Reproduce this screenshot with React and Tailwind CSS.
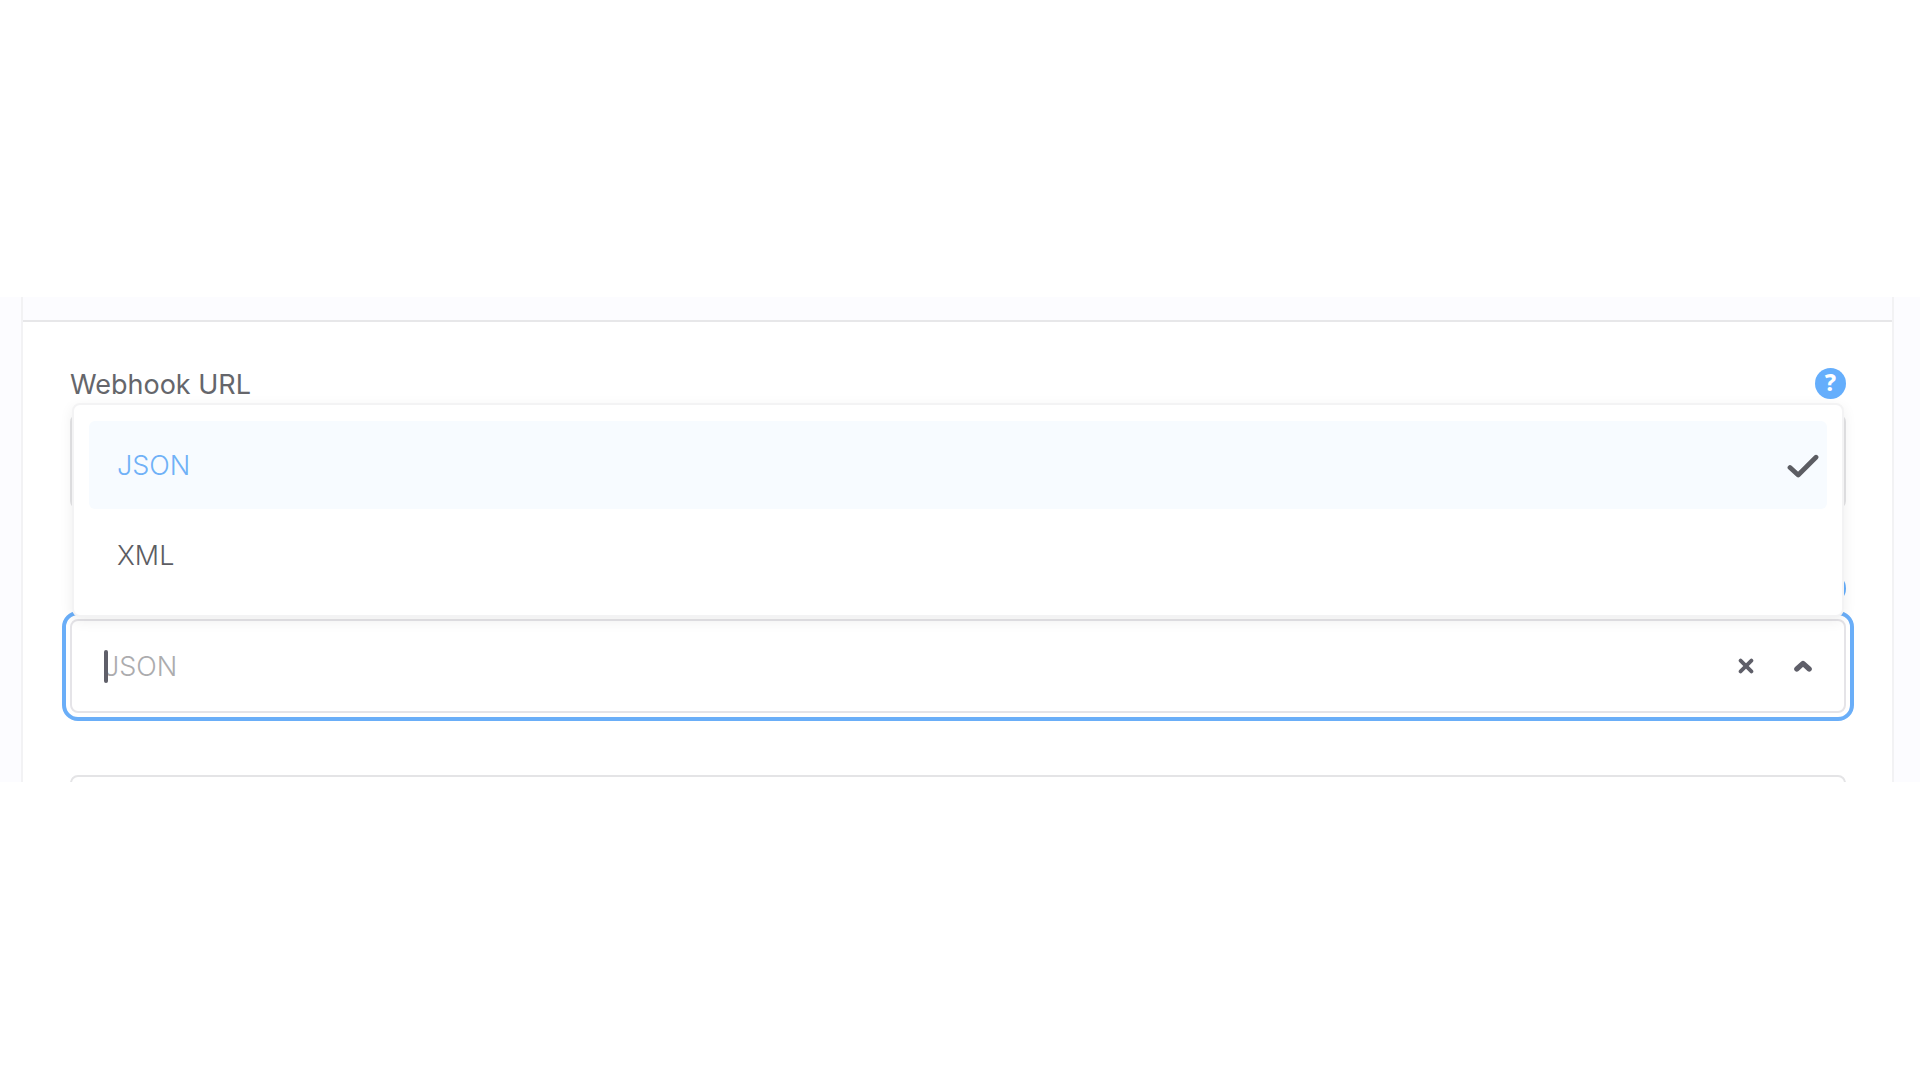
import React from "react";

function HelpButton({ label }) {
  return (
    <button
      type="button"
      aria-label={label}
      className="flex size-[31px] items-center justify-center rounded-full bg-[#65aefc] pb-0.5 font-['Noto_Sans',sans-serif] text-[23px] leading-none font-extrabold text-white"
    >
      ?
    </button>
  );
}

function CheckIcon() {
  return (
    <svg viewBox="0 0 32 24" className="h-6 w-8" fill="none" stroke="#5c5d63" strokeWidth="4.8" strokeLinecap="round" strokeLinejoin="round" aria-hidden="true">
      <path d="M3 13.5 11.2 21 29 3.2" />
    </svg>
  );
}

function ClearIcon() {
  return (
    <svg viewBox="0 0 16 16" className="size-4" fill="none" stroke="#5f5f69" strokeWidth="3.8" strokeLinecap="round" aria-hidden="true">
      <path d="M2.6 2.6 13.4 13.4M13.4 2.6 2.6 13.4" />
    </svg>
  );
}

function ChevronUpIcon() {
  return (
    <svg viewBox="0 0 18 12" className="h-3 w-[18px]" fill="none" stroke="#5f5f69" strokeWidth="5.2" strokeLinecap="round" strokeLinejoin="round" aria-hidden="true">
      <path d="M2.8 9 9 3.4 15.2 9" />
    </svg>
  );
}

function Option({ children, selected }) {
  return (
    <button
      type="button"
      role="option"
      aria-selected={selected}
      className={
        selected
          ? "flex h-[88px] w-full items-center justify-between rounded-md bg-[#f7fbff] pt-0.5 pr-2 pl-7 text-[#6fb1f7]"
          : "flex h-[88px] w-full items-center justify-between rounded-md pt-0.5 pr-2 pl-7 text-[#5c5d63]"
      }
    >
      <span>{children}</span>
      {selected && <CheckIcon />}
    </button>
  );
}

export default function App() {
  return (
    <main className="min-h-screen bg-white pt-[297px] font-[Inter,sans-serif] text-[27px] leading-[34px] font-[360] text-[#5c5d63]">
      <section className="bg-[#fcfcff] pr-[26px] pl-[21px]">
        <div className="border-x-2 border-[#f2f2f4] bg-white">
          <div className="h-[25px] border-b-2 border-[#e7e7e9] bg-[#fcfcff]" />
          <form className="pt-[46px] pr-[46px] pl-[47px]">
            <div className="flex items-start justify-between">
              <label htmlFor="webhook-url" className="font-normal text-[#65666b]">Webhook URL</label>
              <HelpButton label="Webhook URL help" />
            </div>
            <input
              id="webhook-url"
              type="text"
              className="mt-3 block h-[95px] w-full rounded-lg border-2 border-[#e4e4e6] px-8 outline-none"
            />
            <div className="mt-[62px] flex h-[34px] items-center justify-end">
              <HelpButton label="Format help" />
            </div>
            <div className="relative mt-3.5 flex h-[94px] items-center rounded-lg border-2 border-[#e5e4e8] pr-8 pl-8 outline-4 outline-offset-4 outline-[#6aaef8]">
              <div className="relative flex grow items-center">
                <input
                  type="text"
                  role="combobox"
                  aria-label="Format"
                  aria-expanded="true"
                  aria-controls="format-options"
                  placeholder="JSON"
                  className="w-full bg-transparent pt-0.5 outline-none placeholder:text-[#acacae]"
                />
                <span className="absolute left-0 h-[33px] w-1 rounded-sm bg-[#5f5f69]" />
              </div>
              <button type="button" aria-label="Clear" className="mr-10">
                <ClearIcon />
              </button>
              <button type="button" aria-label="Close options">
                <ChevronUpIcon />
              </button>
              <div
                id="format-options"
                role="listbox"
                className="absolute inset-x-0 bottom-full mb-1 flex flex-col gap-0.5 rounded-lg border-2 border-[#f3f3f4] bg-white px-[15px] py-4 shadow-[0_4px_14px_rgba(0,0,0,0.07)]"
              >
                <Option selected>JSON</Option>
                <Option>XML</Option>
              </div>
            </div>
            <div className="mt-[62px] h-[7px] overflow-hidden">
              <input
                type="text"
                aria-label="Value"
                className="block h-[95px] w-full rounded-lg border-2 border-[#e4e4e6] px-8 outline-none"
              />
            </div>
          </form>
        </div>
      </section>
    </main>
  );
}
